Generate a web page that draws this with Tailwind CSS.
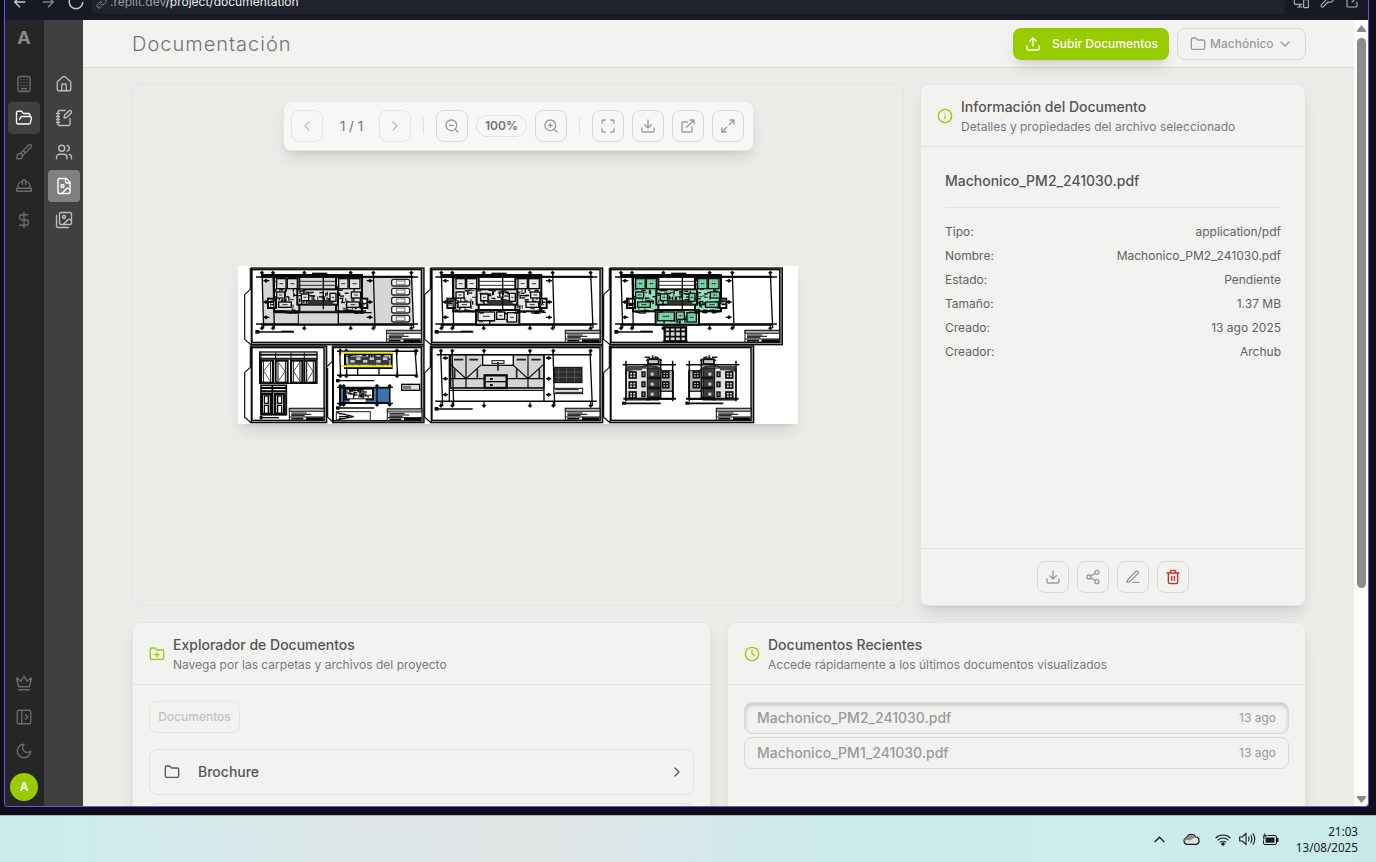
<!DOCTYPE html>
<html lang="es">
<head>
<meta charset="utf-8">
<title>Documentación</title>
<script src="https://cdn.jsdelivr.net/npm/@tailwindcss/browser@4"></script>
</head>
<body class="w-[1376px] h-[862px] overflow-hidden bg-[#0f0e17] font-['Inter',sans-serif] flex flex-col">
<svg class="hidden">
  <symbol id="building" viewBox="0 0 24 24"><rect width="16" height="20" x="4" y="2" rx="2"/><path d="M9 22v-4h6v4M8 6h.01M16 6h.01M12 6h.01M12 10h.01M12 14h.01M16 10h.01M16 14h.01M8 10h.01M8 14h.01"/></symbol>
  <symbol id="folder-open" viewBox="0 0 24 24"><path d="m6 14 1.5-2.9A2 2 0 0 1 9.24 10H20a2 2 0 0 1 1.94 2.5l-1.54 6a2 2 0 0 1-1.95 1.5H4a2 2 0 0 1-2-2V5a2 2 0 0 1 2-2h3.9a2 2 0 0 1 1.69.9l.81 1.2a2 2 0 0 0 1.67.9H18a2 2 0 0 1 2 2v2"/></symbol>
  <symbol id="brush" viewBox="0 0 24 24"><path d="m11 10 3 3"/><path d="M6.5 21A3.5 3.5 0 1 0 3 17.5a2.62 2.62 0 0 1-.708 1.792A1 1 0 0 0 3 21z"/><path d="M9.969 17.031 21.378 5.624a1 1 0 0 0-3.002-3.002L6.967 14.031"/></symbol>
  <symbol id="hat" viewBox="0 0 24 24"><path d="M10 10V5a1 1 0 0 1 1-1h2a1 1 0 0 1 1 1v5"/><path d="M14 6a6 6 0 0 1 6 6v3"/><path d="M4 15v-3a6 6 0 0 1 6-6"/><rect x="2" y="15" width="20" height="4" rx="1"/></symbol>
  <symbol id="dollar" viewBox="0 0 24 24"><path d="M12 2v20M17 5H9.5a3.5 3.5 0 0 0 0 7h5a3.5 3.5 0 0 1 0 7H6"/></symbol>
  <symbol id="crown" viewBox="0 0 24 24"><path d="M11.562 3.266a.5.5 0 0 1 .876 0L15.39 8.87a1 1 0 0 0 1.516.294L21.183 5.5a.5.5 0 0 1 .798.519l-2.834 10.246a1 1 0 0 1-.956.734H5.81a1 1 0 0 1-.957-.734L2.02 6.02a.5.5 0 0 1 .798-.519l4.276 3.664a1 1 0 0 0 1.516-.294z"/><path d="M5 21h14"/></symbol>
  <symbol id="panel" viewBox="0 0 24 24"><rect width="18" height="18" x="3" y="3" rx="2"/><path d="M9 3v18M14 9l3 3-3 3"/></symbol>
  <symbol id="moon" viewBox="0 0 24 24"><path d="M12 3a6 6 0 0 0 9 9 9 9 0 1 1-9-9Z"/></symbol>
  <symbol id="home" viewBox="0 0 24 24"><path d="M15 21v-8a1 1 0 0 0-1-1h-4a1 1 0 0 0-1 1v8"/><path d="M3 10a2 2 0 0 1 .709-1.528l7-5.999a2 2 0 0 1 2.582 0l7 5.999A2 2 0 0 1 21 10v9a2 2 0 0 1-2 2H5a2 2 0 0 1-2-2z"/></symbol>
  <symbol id="notebook" viewBox="0 0 24 24"><path d="M13.4 2H6a2 2 0 0 0-2 2v16a2 2 0 0 0 2 2h12a2 2 0 0 0 2-2v-7.4M2 6h4M2 10h4M2 14h4M2 18h4"/><path d="M21.378 5.626a1 1 0 1 0-3.004-3.004l-5.01 5.012a2 2 0 0 0-.506.854l-.837 2.87a.5.5 0 0 0 .62.62l2.87-.837a2 2 0 0 0 .854-.506z"/></symbol>
  <symbol id="users" viewBox="0 0 24 24"><path d="M16 21v-2a4 4 0 0 0-4-4H6a4 4 0 0 0-4 4v2"/><circle cx="9" cy="7" r="4"/><path d="M22 21v-2a4 4 0 0 0-3-3.870M16 3.130a4 4 0 0 1 0 7.750"/></symbol>
  <symbol id="file-image" viewBox="0 0 24 24"><path d="M15 2H6a2 2 0 0 0-2 2v16a2 2 0 0 0 2 2h12a2 2 0 0 0 2-2V7Z"/><path d="M14 2v4a2 2 0 0 0 2 2h4"/><circle cx="10" cy="12" r="2"/><path d="m20 17-1.296-1.296a2.41 2.41 0 0 0-3.408 0L9 22"/></symbol>
  <symbol id="images" viewBox="0 0 24 24"><path d="M18 22H4a2 2 0 0 1-2-2V6"/><path d="m22 13-1.296-1.296a2.41 2.41 0 0 0-3.408 0L11 18"/><circle cx="12" cy="8" r="2"/><rect width="16" height="16" x="6" y="2" rx="2"/></symbol>
  <symbol id="upload" viewBox="0 0 24 24"><path d="M21 15v4a2 2 0 0 1-2 2H5a2 2 0 0 1-2-2v-4M17 8l-5-5-5 5M12 3v12"/></symbol>
  <symbol id="download" viewBox="0 0 24 24"><path d="M21 15v4a2 2 0 0 1-2 2H5a2 2 0 0 1-2-2v-4M7 10l5 5 5-5M12 15V3"/></symbol>
  <symbol id="folder" viewBox="0 0 24 24"><path d="M20 20a2 2 0 0 0 2-2V8a2 2 0 0 0-2-2h-7.9a2 2 0 0 1-1.69-.9L9.6 3.9A2 2 0 0 0 7.93 3H4a2 2 0 0 0-2 2v13a2 2 0 0 0 2 2Z"/></symbol>
  <symbol id="folder-plus" viewBox="0 0 24 24"><path d="M12 10v6M9 13h6"/><path d="M20 20a2 2 0 0 0 2-2V8a2 2 0 0 0-2-2h-7.9a2 2 0 0 1-1.69-.9L9.6 3.9A2 2 0 0 0 7.93 3H4a2 2 0 0 0-2 2v13a2 2 0 0 0 2 2Z"/></symbol>
  <symbol id="chev-down" viewBox="0 0 24 24"><path d="m6 9 6 6 6-6"/></symbol>
  <symbol id="chev-left" viewBox="0 0 24 24"><path d="m15 18-6-6 6-6"/></symbol>
  <symbol id="chev-right" viewBox="0 0 24 24"><path d="m9 18 6-6-6-6"/></symbol>
  <symbol id="zoom-out" viewBox="0 0 24 24"><circle cx="11" cy="11" r="8"/><path d="m21 21-4.35-4.35M8 11h6"/></symbol>
  <symbol id="zoom-in" viewBox="0 0 24 24"><circle cx="11" cy="11" r="8"/><path d="m21 21-4.35-4.35M11 8v6M8 11h6"/></symbol>
  <symbol id="maximize" viewBox="0 0 24 24"><path d="M8 3H5a2 2 0 0 0-2 2v3M21 8V5a2 2 0 0 0-2-2h-3M3 16v3a2 2 0 0 0 2 2h3M16 21h3a2 2 0 0 0 2-2v-3"/></symbol>
  <symbol id="external" viewBox="0 0 24 24"><path d="M15 3h6v6M10 14 21 3M18 13v6a2 2 0 0 1-2 2H5a2 2 0 0 1-2-2V8a2 2 0 0 1 2-2h6"/></symbol>
  <symbol id="expand" viewBox="0 0 24 24"><path d="M15 3h6v6M21 3l-7 7M3 21l7-7M9 21H3v-6"/></symbol>
  <symbol id="info" viewBox="0 0 24 24"><circle cx="12" cy="12" r="10"/><path d="M12 16v-4M12 8h.01"/></symbol>
  <symbol id="clock" viewBox="0 0 24 24"><circle cx="12" cy="12" r="10"/><path d="M12 6v6l4 2"/></symbol>
  <symbol id="share" viewBox="0 0 24 24"><circle cx="18" cy="5" r="3"/><circle cx="6" cy="12" r="3"/><circle cx="18" cy="19" r="3"/><path d="m8.59 13.51 6.83 3.98M15.41 6.51l-6.82 3.98"/></symbol>
  <symbol id="pen" viewBox="0 0 24 24"><path d="M12 20h9"/><path d="M16.376 3.622a1 1 0 0 1 3.002 3.002L7.368 18.635a2 2 0 0 1-.855.506l-2.872.838a.5.5 0 0 1-.62-.62l.838-2.872a2 2 0 0 1 .506-.854z"/></symbol>
  <symbol id="trash" viewBox="0 0 24 24"><path d="M3 6h18M19 6v14a2 2 0 0 1-2 2H7a2 2 0 0 1-2-2V6M8 6V4a2 2 0 0 1 2-2h4a2 2 0 0 1 2 2v2M10 11v6M14 11v6"/></symbol>
  <symbol id="arrow" viewBox="0 0 24 24"><path d="m12 19-7-7 7-7M19 12H5"/></symbol>
  <symbol id="reload" viewBox="0 0 24 24"><path d="M21 12a9 9 0 1 1-9-9c2.52 0 4.93 1 6.74 2.74L21 8M21 3v5h-5"/></symbol>
  <symbol id="link" viewBox="0 0 24 24"><path d="M10 13a5 5 0 0 0 7.54.54l3-3a5 5 0 0 0-7.07-7.07l-1.72 1.71"/><path d="M14 11a5 5 0 0 0-7.54-.54l-3 3a5 5 0 0 0 7.07 7.07l1.71-1.71"/></symbol>
  <symbol id="devices" viewBox="0 0 24 24"><path d="M14 17H4a2 2 0 0 1-2-2V6a2 2 0 0 1 2-2h14a2 2 0 0 1 2 2M6 21h8M10 17v4"/><rect x="16" y="10" width="7" height="12" rx="1"/></symbol>
  <symbol id="wrench" viewBox="0 0 24 24"><path d="M14.7 6.3a1 1 0 0 0 0 1.4l1.6 1.6a1 1 0 0 0 1.4 0l3.77-3.77a6 6 0 0 1-7.94 7.94l-6.91 6.91a2.12 2.12 0 0 1-3-3l6.91-6.91a6 6 0 0 1 7.94-7.94l-3.76 3.76z"/></symbol>
</svg>

<div class="relative w-full h-[807px] shrink-0 pl-1 pr-[7px]">
 <div class="h-full flex flex-col border-x border-b border-[#6f52f0] rounded-b-[4px] overflow-hidden">
  <!-- browser bar -->
  <div class="h-5 shrink-0 bg-[#171a24] border-b border-[#1e1a28] relative overflow-hidden">
    <div class="absolute -top-[7px] left-0 right-0 h-[21px] flex items-start text-[#c2c5cd]">
      <div class="flex w-[87px] pl-[6px] gap-[10px] fill-none stroke-current stroke-2">
        <svg class="size-[18px]"><use href="#arrow"/></svg>
        <svg class="size-[18px] rotate-180 text-[#7c818d] stroke-current"><use href="#arrow"/></svg>
        <svg class="size-[18px]"><use href="#reload"/></svg>
      </div>
      <div class="w-[1193px] h-[21px] bg-[#20232d] rounded-b-[4px] flex items-start pl-1 text-[12px] leading-[18px]">
        <svg class="size-[11px] mt-[5px] fill-none stroke-[#8b909b] stroke-2"><use href="#link"/></svg>
        <span class="ml-[3px] text-[#9a9fab]">.replit.dev<span class="text-[#eceef2]">/project/documentation</span></span>
      </div>
      <div class="flex pl-[8px] gap-[10px] fill-none stroke-[#aeb2bc] stroke-[1.7]">
        <svg class="size-4"><use href="#devices"/></svg>
        <svg class="size-4"><use href="#wrench"/></svg>
        <svg class="size-4"><use href="#external"/></svg>
      </div>
    </div>
  </div>

  <div class="flex flex-1 min-h-0">
    <!-- main sidebar -->
    <nav class="w-[39px] bg-[#262626] pl-[3px] pr-1 flex flex-col items-center text-[#6b6b6b]">
      <div class="h-[34px] mb-[14px] flex items-center text-[18px] font-bold text-[#8a8a8a]">A</div>
      <div class="flex flex-col gap-[2px] fill-none stroke-current stroke-[1.8] [stroke-linecap:round] [stroke-linejoin:round]">
        <a class="size-8 grid place-items-center"><svg class="size-[18px]"><use href="#building"/></svg></a>
        <a class="size-8 grid place-items-center rounded-[4px] bg-[#404040] text-white stroke-white"><svg class="size-[18px]"><use href="#folder-open"/></svg></a>
        <a class="size-8 grid place-items-center"><svg class="size-[18px]"><use href="#brush"/></svg></a>
        <a class="size-8 grid place-items-center"><svg class="size-[18px]"><use href="#hat"/></svg></a>
        <a class="size-8 grid place-items-center"><svg class="size-[18px]"><use href="#dollar"/></svg></a>
      </div>
      <div class="mt-auto flex flex-col items-center gap-[2px] pb-[5px] fill-none stroke-current stroke-[1.8] [stroke-linecap:round] [stroke-linejoin:round]">
        <a class="size-8 grid place-items-center"><svg class="size-[18px]"><use href="#crown"/></svg></a>
        <a class="size-8 grid place-items-center"><svg class="size-[18px]"><use href="#panel"/></svg></a>
        <a class="size-8 grid place-items-center"><svg class="size-[18px]"><use href="#moon"/></svg></a>
        <span class="mt-1 size-7 rounded-full bg-[#98cc00] text-white text-[12px] font-semibold grid place-items-center stroke-none">A</span>
      </div>
    </nav>
    <nav class="w-[39px] bg-[#404040] pl-1 pr-[3px] pt-12 flex flex-col gap-[2px] text-[#bdbdbd] fill-none stroke-current stroke-[1.8] [stroke-linecap:round] [stroke-linejoin:round]">
      <a class="size-8 grid place-items-center"><svg class="size-[18px]"><use href="#home"/></svg></a>
      <a class="size-8 grid place-items-center"><svg class="size-[18px]"><use href="#notebook"/></svg></a>
      <a class="size-8 grid place-items-center"><svg class="size-[18px]"><use href="#users"/></svg></a>
      <a class="size-8 grid place-items-center rounded-[4px] bg-[#808080] stroke-white"><svg class="size-[18px]"><use href="#file-image"/></svg></a>
      <a class="size-8 grid place-items-center"><svg class="size-[18px]"><use href="#images"/></svg></a>
    </nav>

    <main class="flex-1 min-w-0 flex flex-col bg-[#ebece7] overflow-hidden">
      <header class="h-12 shrink-0 bg-[#f2f2f0] border-b border-[#d9d9d9] pl-[49px] pr-12 flex items-center gap-2">
        <h1 class="mr-auto text-[20px] font-light tracking-[1px] text-[#747474]">Documentación</h1>
        <button class="h-8 w-[156px] rounded-lg bg-[#98cc00] text-white text-[12px] font-medium pl-3 flex items-center shadow-lg"><svg class="size-4 mr-[11px] fill-none stroke-current stroke-2 [stroke-linecap:round] [stroke-linejoin:round]"><use href="#upload"/></svg>Subir Documentos</button>
        <button class="h-8 w-[129px] rounded-lg border border-[#d9d9d9] text-[#9a9a9a] text-[12px] font-medium pl-3 flex items-center fill-none stroke-current stroke-2 [stroke-linecap:round] [stroke-linejoin:round]"><svg class="size-4 mr-1"><use href="#folder"/></svg><span class="stroke-none">Machónico</span><svg class="size-4 ml-[3px]"><use href="#chev-down"/></svg></button>
      </header>

      <div class="flex-1 min-h-0 pl-[49px] pr-12 pt-4 flex flex-col gap-4">
        <div class="flex gap-4 h-[522px] shrink-0">
          <!-- viewer -->
          <section class="w-[772px] rounded-lg border border-[#e3e4e4] flex flex-col items-center pt-4">
            <div class="h-[50px] w-[471px] bg-[#f7f7f7] rounded-lg border border-[#e4e4e4] shadow-lg pl-[7.5px] flex items-center text-[#9a9a9a] fill-none stroke-current stroke-2 [stroke-linecap:round] [stroke-linejoin:round]">
              <button class="size-8 rounded-lg border border-[#d9d9d9] grid place-items-center opacity-60"><svg class="size-4"><use href="#chev-left"/></svg></button>
              <span class="w-14 pt-px pl-px text-center text-[13.3px] text-[#737373] stroke-none">1 / 1</span>
              <button class="size-8 rounded-lg border border-[#d9d9d9] grid place-items-center opacity-60"><svg class="size-4"><use href="#chev-right"/></svg></button>
              <i class="w-px h-4 bg-[#e2e2e4] mx-3"></i>
              <button class="size-8 rounded-lg border border-[#d9d9d9] grid place-items-center"><svg class="size-4"><use href="#zoom-out"/></svg></button>
              <span class="mx-2 w-[51px] h-[22px] rounded-full border border-[#e2e2e4] grid place-items-center text-[12px] font-semibold text-[#737373] stroke-none">100%</span>
              <button class="size-8 rounded-lg border border-[#d9d9d9] grid place-items-center"><svg class="size-4"><use href="#zoom-in"/></svg></button>
              <i class="w-px h-4 bg-[#e2e2e4] mx-3"></i>
              <div class="flex gap-2">
                <button class="size-8 rounded-lg border border-[#d9d9d9] grid place-items-center"><svg class="size-4"><use href="#maximize"/></svg></button>
                <button class="size-8 rounded-lg border border-[#d9d9d9] grid place-items-center"><svg class="size-4"><use href="#download"/></svg></button>
                <button class="size-8 rounded-lg border border-[#d9d9d9] grid place-items-center"><svg class="size-4"><use href="#external"/></svg></button>
                <button class="size-8 rounded-lg border border-[#d9d9d9] grid place-items-center"><svg class="size-4"><use href="#expand"/></svg></button>
              </div>
            </div>
            <div class="mt-[115px] w-[560px] h-[158px] bg-white shadow-lg"><svg id="plans" class="w-[560px] h-[158px]" viewBox="0 0 560 158"></svg></div>
          </section>
          <!-- document info -->
          <section class="w-[386px] rounded-lg border border-[#e4e4e4] bg-[#f2f2f0] shadow-lg flex flex-col text-[12px] text-[#626262]">
            <div class="h-[62px] border-b border-[#e2e2e2] pl-4 flex items-center gap-2">
              <svg class="size-4 fill-none stroke-[#98cc00] stroke-2 [stroke-linecap:round] [stroke-linejoin:round]"><use href="#info"/></svg>
              <div class="pt-[2px]"><h2 class="text-[14px] leading-5 font-medium text-[#555]">Información del Documento</h2><p class="leading-5 text-[#777982]">Detalles y propiedades del archivo seleccionado</p></div>
            </div>
            <div class="flex-1 px-6 pt-6">
              <h3 class="text-[14px] leading-5 font-medium text-[#555] pb-4 border-b border-[#e2e2e2]">Machonico_PM2_241030.pdf</h3>
              <dl class="pt-3 leading-6">
                <div class="flex justify-between"><dt>Tipo:</dt><dd>application/pdf</dd></div>
                <div class="flex justify-between"><dt>Nombre:</dt><dd>Machonico_PM2_241030.pdf</dd></div>
                <div class="flex justify-between"><dt>Estado:</dt><dd>Pendiente</dd></div>
                <div class="flex justify-between"><dt>Tamaño:</dt><dd>1.37 MB</dd></div>
                <div class="flex justify-between"><dt>Creado:</dt><dd>13 ago 2025</dd></div>
                <div class="flex justify-between"><dt>Creador:</dt><dd>Archub</dd></div>
              </dl>
            </div>
            <div class="h-[57px] border-t border-[#e2e2e2] flex items-center justify-center gap-2 text-[#9a9a9a] fill-none stroke-current stroke-2 [stroke-linecap:round] [stroke-linejoin:round]">
              <button class="size-8 rounded-lg border border-[#d9d9d9] grid place-items-center"><svg class="size-4"><use href="#download"/></svg></button>
              <button class="size-8 rounded-lg border border-[#d9d9d9] grid place-items-center"><svg class="size-4"><use href="#share"/></svg></button>
              <button class="size-8 rounded-lg border border-[#d9d9d9] grid place-items-center"><svg class="size-4"><use href="#pen"/></svg></button>
              <button class="size-8 rounded-lg border border-[#d9d9d9] grid place-items-center stroke-[#dc2626]"><svg class="size-4"><use href="#trash"/></svg></button>
            </div>
          </section>
        </div>
        <div class="grid grid-cols-2 gap-4 h-[400px] shrink-0">
          <section class="rounded-lg border border-[#e4e4e4] bg-[#f2f2f0] shadow-lg text-[12px]">
            <div class="h-[62px] border-b border-[#e2e2e2] pl-4 flex items-center gap-2">
              <svg class="size-4 fill-none stroke-[#98cc00] stroke-2 [stroke-linecap:round] [stroke-linejoin:round]"><use href="#folder-plus"/></svg>
              <div class="pt-[2px]"><h2 class="text-[14px] leading-5 font-medium text-[#555]">Explorador de Documentos</h2><p class="leading-5 text-[#777982]">Navega por las carpetas y archivos del proyecto</p></div>
            </div>
            <div class="p-4 flex flex-col items-start">
              <button class="h-8 w-[91px] rounded-lg border border-[#e4e4e4] font-medium text-[#c2c2c2] mb-4">Documentos</button>
              <div class="w-full h-[46px] rounded-lg border border-[#e2e2e2] px-[14px] pr-2 mb-2 flex items-center text-[14px] font-medium text-[#555] fill-none stroke-current stroke-2 [stroke-linecap:round] [stroke-linejoin:round]">
                <svg class="size-4 mr-[18px]"><use href="#folder"/></svg><span class="stroke-none mr-auto pb-[2px]">Brochure</span><svg class="size-4"><use href="#chev-right"/></svg>
              </div>
              <div class="w-full h-[46px] rounded-lg border border-[#e2e2e2]"></div>
            </div>
          </section>
          <section class="rounded-lg border border-[#e4e4e4] bg-[#f2f2f0] shadow-lg text-[12px]">
            <div class="h-[62px] border-b border-[#e2e2e2] pl-4 flex items-center gap-2">
              <svg class="size-4 fill-none stroke-[#98cc00] stroke-2 [stroke-linecap:round] [stroke-linejoin:round]"><use href="#clock"/></svg>
              <div class="pt-[2px]"><h2 class="text-[14px] leading-5 font-medium text-[#555]">Documentos Recientes</h2><p class="leading-5 text-[#777982]">Accede rápidamente a los últimos documentos visualizados</p></div>
            </div>
            <div class="px-4 pt-[17px] flex flex-col gap-[3px] text-[#9a9a9a]">
              <div class="h-8 rounded-lg border border-[#d9d9d9] px-3 flex items-center justify-between shadow-[inset_0_2px_4px_rgba(0,0,0,0.2)]"><span class="pb-[2px] text-[14px] font-medium">Machonico_PM2_241030.pdf</span><span>13 ago</span></div>
              <div class="h-8 rounded-lg border border-[#d9d9d9] px-3 flex items-center justify-between"><span class="pb-[2px] text-[14px] font-medium">Machonico_PM1_241030.pdf</span><span>13 ago</span></div>
            </div>
          </section>
        </div>
      </div>
    </main>
    <!-- scrollbar -->
    <div class="w-[14px] bg-[#fcfcfc] flex flex-col items-center pt-[5px] pb-[3px] pl-px">
      <svg class="w-[9px] h-[7px] fill-[#8b8b8b]" viewBox="0 0 9 7"><path d="M4.5 0 9 5.5V7H0V5.5z"/></svg>
      <div class="mt-[6px] w-[9px] h-[550px] rounded-full bg-[#8b8b8b]"></div>
      <svg class="mt-auto w-[9px] h-[7px] fill-[#8b8b8b]" viewBox="0 0 9 7"><path d="M4.500 7 0 1.500V0h9v1.500z"/></svg>
    </div>
  </div>
 </div>
</div>
<div class="h-2 shrink-0"></div>
<!-- taskbar -->
<footer class="flex-1 border-t border-[#a9b3b6] bg-[linear-gradient(90deg,#c8ebeb_0%,#cdecec_5%,#d7e8ea_17%,#dfe6e7_27%,#e0e5e5_40%,#d9e7ea_48%,#cfe9eb_56%,#c9ebec_66%,#cdecee_80%,#c9eaeb_100%)] flex items-center justify-end pr-[18px] text-[#141b1d]">
  <svg class="w-[11px] h-[7px] mr-[18px] fill-none stroke-current stroke-[1.3]" viewBox="0 0 11 7"><path d="M.7 6 5.500 1.200 10.300 6"/></svg>
  <svg class="w-[17px] h-3 mr-[15px]" viewBox="0 0 17 12"><path d="M4 11.300a3.300 3.300 0 0 1-.4-6.500A5 5 0 0 1 12.700 4a3.700 3.700 0 0 1 .5 7.300z" fill="#e3e3e3" stroke="#141b1d" stroke-width="1.200"/><path d="M1.300 7.500C1.300 5.500 2.500 5 3.800 4.900 5 1 11 .6 12.400 4.300l-6 3.200C5 6.500 3 7 1.500 8.300z" fill="#8b8b8b"/></svg>
  <svg class="w-4 h-[13px] mr-2 fill-none stroke-current stroke-[1.1]" viewBox="0 0 16 13"><path d="M.6 5a10.500 10.500 0 0 1 14.800 0M2.800 7.200a7.400 7.400 0 0 1 10.400 0M5 9.400a4.300 4.300 0 0 1 6 0"/><circle cx="8" cy="11" r="1.200" fill="currentColor"/></svg>
  <svg class="w-[17px] h-[14px] mr-[6px] fill-none stroke-current stroke-[1.1]" viewBox="0 0 17 14"><path d="M.7 5h2.500L7 1.500v11L3.200 9H.7zM9.300 4.800q1.500 2.200 0 4.400M11.600 3q2.700 4 0 8M13.800 1.200q4 5.800 0 11.600"/></svg>
  <svg class="w-[17px] h-[14px] mr-[17px] mb-px" viewBox="0 0 17 14"><rect x="1.500" y="3.500" width="13" height="9" rx="1.500" fill="none" stroke="currentColor"/><rect x="3.500" y="5.500" width="9" height="5.200" fill="currentColor"/><path d="M15 6h1.500v4H15z" fill="currentColor"/><path d="M3.500 0 .5 4.300h2l-1 4 4-5.300h-2z" fill="currentColor" stroke="#cdebec" stroke-width=".5"/></svg>
  <div class="text-right font-['Noto_Sans',sans-serif] text-[11.7px] leading-4"><div>21:03</div><div>13/08/2025</div></div>
</footer>

<script>
// Draws the architectural plan sheets shown inside the viewer.
const out = [];
const add = s => out.push(s);
const R = (x, y, w, h, f = '#0a0a0a', s = 'none', sw = 0) => add(`<rect x="${x}" y="${y}" width="${w}" height="${h}" fill="${f}" stroke="${s}" stroke-width="${sw}"/>`);
const L = (d, sw = 3, c = '#0a0a0a', f = 'none') => add(`<path d="${d}" fill="${f}" stroke="${c}" stroke-width="${sw}"/>`);
let seed = 7;
const rnd = () => (seed = (seed * 16807) % 2147483647) / 2147483647;

function titleBlock(x, y) {
  R(x, y, 104, 35, '#fff', '#111', 3);
  R(x, y, 104, 9, '#aaa', '#111', 2.5);
  L(`M${x} ${y + 26}h104`, 3);
  L(`M${x + 6} ${y + 14}h46M${x + 6} ${y + 18}h60M${x + 6} ${y + 22}h40`, 3);
  L(`M${x + 6} ${y + 31}h36`, 5); L(`M${x + 50} ${y + 31}h52`, 8);
}
function sheet(x, y, w, h) {
  R(x, y, w, h, '#8f8f8f', '#0a0a0a', 4);
  R(x + 2, y + 5, w - 10, h - 12, '#fff', '#0a0a0a', 4);
  L(`M${x - 3} ${y}v64l-17 16v134l20 17`, 3.500);
  titleBlock(x + w - 112, y + h - 43);
}
// Grid axis heads drawn as small diamonds.
const head = (x, y) => L(`M${x - 6} ${y}l6-6 6 6-6 6z`, 1, '#0a0a0a', '#0a0a0a');
function axes(xs, y1, y2) { xs.forEach(x => { L(`M${x} ${y1}v${y2 - y1}`, 4); head(x, y1 + 2); head(x, y2 - 2); }); }
function marks(xs, y1, y2) { xs.forEach(x => { head(x, y1); head(x, y2); L(`M${x} ${y1}v14M${x} ${y2 - 14}v14`, 3); }); }

function tile(x, y, w, h, tint) {
  R(x, y, w, h, tint, '#0a0a0a', 4);
  if (tint[1] === '8') for (let i = 5; i < w; i += 7) L(`M${x + i} ${y}v${h}`, 1.500, '#2f8a64');
  L(`M${x + w * .3} ${y + h * .5}h${w * .4}`, 3, '#333');
}
function mass(x, y, w, h, tint, density = 130) {
  R(x, y, w, h, tint, '#0a0a0a', 6);
  for (let i = 0; i < w * h / density; i++) {
    const a = rnd() < .55, px = x + rnd() * (w - 14), py = y + rnd() * (h - 10);
    R(px, py, a ? 12 : 4, a ? 4 : 11, rnd() < .7 ? '#0a0a0a' : '#555');
  }
}
function house(x, y, tint, lower) {
  // two wings joined by a denser service core
  mass(x + 38, y, 76, 102, tint, 190); mass(x + 224, y, 78, 102, tint, 190);
  mass(x + 108, y + 36, 122, 46, tint);
  R(x + 140, y + 68, 76, 14, '#333');
  mass(x + 20, y + 64, 24, 28, '#fff', 100); mass(x + 298, y + 64, 20, 28, '#fff', 100);
  if (lower) mass(x + 106, y + 98, 130, 44, tint, 180);
  [[46,4,28,30],[78,4,30,30],[232,4,28,30],[264,4,32,30],[46,44,24,18],[270,44,28,18],[52,74,38,16],[256,74,38,16],[120,50,22,20],[206,48,18,24]].forEach(a => tile(x + a[0], y + a[1], a[2], a[3], tint));
  if (lower) [[112,104,50,26],[168,104,24,22],[200,106,28,28]].forEach(a => tile(x + a[0], y + a[1], a[2], a[3], tint));
  L(`M${x + 112} ${y + 12}h110M${x + 112} ${y + 24}h110`, 2.5);
  L(`M${x + 186} ${y}v96`, 4);
  for (let k = 0; k < 14; k++) { R(x + 32 + rnd() * 86, y + 96 + rnd() * 10, 12, 4); R(x + 220 + rnd() * 84, y + 96 + rnd() * 10, 12, 4); }
  [10,74,120].forEach(k => { head(x + 14, y + k); head(x + 326, y + k); L(`M${x + 6} ${y + k}h18M${x + 316} ${y + k}h18`, 4); });
}
function plot(x, tint, lower, fill) {
  if (fill) R(x + 4, 45, 452, 141, fill);
  L(`M${x - 16} 45h486M${x - 16} 186h486`, 4.500);
  L(`M${x} 40h305`, 8); L(`M${x} 44h456`, 6); L(`M${x} 188h456`, 6);
  L(`M${x + 152} 34h46`, 4);
  if (fill) R(x + 112, 60, 112, 120, fill);
  house(x, 46, tint, lower);
  L(`M${x + 2} 30l5 168M${x + 35} 30l4 168M${x + 336} 30l5 168M${x + 450} 30l7 168`, 4);
  marks([x + 2, x + 35, x + 336, x + 450, x + 129, x + 268], 32, 199);
  L(`M${x - 10} 210h108`, 4); R(x - 18, 204, 12, 11); R(x + 60, 206, 36, 4);
}

add('<g transform="translate(-3 -4) scale(.3333)">');
sheet(49, 18, 518, 230); plot(79, '#dedede', false, '#d6d6d6');
R(190, 148, 120, 38, '#d6d6d6', '#0a0a0a', 3); L('M120 152h290M310 130v56', 3.500);
for (let i = 0; i < 5; i++) { const y = 52 + i * 27; add(`<rect x="470" y="${y}" width="54" height="20" rx="6" fill="#fff" stroke="#222" stroke-width="4"/>`); L(`M484 ${y + 3}v14M510 ${y + 3}v14M484 ${y + 5}h26M484 ${y + 15}h26`, 2.5, '#555'); }
sheet(49, 252, 226, 230);
R(74, 270, 172, 94, '#fff', '#0a0a0a', 4); L('M74 278h174M74 290h174', 6, '#1a1a1a');
[[78,36],[122,36],[168,34],[208,34]].forEach(([x, w], i) => {
  R(x, 296, w, 66, '#fff', '#0a0a0a', 6); L(`M${x + 7} 296v66M${x + w - 7} 296v66`, 3);
  L(i % 2 ? `M${x + 9} 302l${w - 17} 26l-${w - 17} 28` : `M${x + w - 9} 302l-${w - 17} 26l${w - 17} 28`, 2);
  L(`M${x} 300v-28`, 3);
});
R(78, 370, 76, 88, '#fff', '#0a0a0a', 5); L('M78 378h78M78 388h78', 6);
[[80,28],[120,28]].forEach(([x, w]) => { R(x, 396, w, 60, '#fff', '#0a0a0a', 8); R(x + 8, 402, w - 16, 22, '#fff', '#0a0a0a', 4); R(x + 8, 430, w - 16, 24, '#fff', '#0a0a0a', 4); });
L('M112 370v88', 5); R(74, 462, 9, 10); L('M82 467h50', 4);
R(293, 252, 274, 230, '#8f8f8f', '#0a0a0a', 4); R(295, 257, 264, 219, '#fff', '#0a0a0a', 4); L('M276 314l16-16v-46M278 318v148l16 14', 3.500); titleBlock(457, 441);
L('M306 268h244M306 340h240', 4.500); L('M314 262l3 84M332 262l4 84M484 262l4 84M540 262l6 84', 4); marks([316, 334, 486, 544], 266, 342);
mass(330, 276, 140, 42, '#bbb', 110); R(340, 284, 122, 24, '#3a3a3a'); [346,364,384,404,424,444].forEach((x, i) => R(x, i % 2 ? 286 : 294, 13, 8, '#c8c8c8'));
L('M318 272h154M318 313h154', 6, '#efe912'); L('M368 318v20M432 318v20', 4);
R(303, 351, 11, 10); L('M312 356h106', 4);
R(314, 378, 150, 44, '#3e72ab', '#0a0a0a', 4); mass(330, 380, 84, 32, '#fff', 70); R(344, 412, 48, 8, '#fff'); L('M426 370v58M316 370v58M326 370v58M464 370v58', 4); marks([316, 326, 426, 464], 372, 428); L('M306 376h168M306 424h168', 4);
R(303, 433, 11, 10); L('M312 438h106', 4);
R(500, 367, 54, 18, '#ddd', '#0a0a0a', 4); R(504, 371, 24, 10, '#777');
R(304, 449, 102, 26, '#fff', '#222', 3); L('M306 452l50 12l-50 10M312 456h18M312 464h30M312 470h18', 3.500);
add('</g><g transform="translate(186 -4) scale(.3333)">');
sheet(22, 18, 514, 230); plot(50, '#e9e9e9', true);
sheet(22, 252, 514, 230);
R(80, 278, 280, 100, '#d3d3d3', '#0a0a0a', 4); R(176, 278, 92, 32, '#fff', '#0a0a0a', 4); R(204, 296, 36, 8, '#fff', '#0a0a0a', 3);
L('M38 278h466M34 418h484', 4.500); L('M76 385h284M78 378h282', 3.500); L('M50 264l6 168M84 264l5 168M387 264l5 168M498 264l7 168', 4); marks([51, 85, 180, 318, 388, 500], 266, 431);
L('M80 308l46 42l46-42M126 278v100M266 308l46 42l46-42M312 278v100M80 350h280', 3.500); L('M76 278v140M360 278v140', 4);
L('M90 293h28M136 293h26M278 293h28M322 293h28M92 320v28M160 320v28M278 320v28M346 320v28M222 300v26', 5, '#222');
R(182, 340, 66, 38, '#d3d3d3', '#0a0a0a', 7); L('M182 359h66', 4); R(198, 348, 8, 6); R(198, 366, 8, 6);
[288, 350, 398].forEach(y => { head(64, y); head(374, y); L(`M56 ${y}h16M366 ${y}h16`, 4); });
R(390, 316, 84, 46, '#2c2c2c', '#0a0a0a', 3); L('M404 318v42M428 318v42M452 318v42M392 330h80M392 346h80', 1.500, '#7c7c7c');
R(390, 379, 86, 16, '#fff', '#0a0a0a', 3); L('M394 383h70M394 391h80', 3);
L('M32 441h114', 4); R(32, 435, 11, 11);
add('</g><g transform="translate(362 -4) scale(.3333)">');
sheet(31, 18, 516, 230); plot(61, '#8fe0bb', true);
R(194, 196, 64, 42, '#ddd', '#0a0a0a', 7); L('M194 208h64M194 224h64M210 196v42M226 196v42M242 196v42', 5); L('M188 238h76', 4);
sheet(31, 252, 430, 230);
function facade(x, flip) {
  add(`<g transform="translate(${x} 0) scale(${flip ? -1 : 1} 1)">`);
  R(10, 318, 68, 96, '#e2e2e2', '#0a0a0a', 3); R(74, 318, 34, 96, '#3c3c3c', '#0a0a0a', 3); R(112, 326, 40, 62, '#b4b4b4', '#0a0a0a', 3); R(112, 388, 40, 24, '#fff', '#0a0a0a', 3);
  L('M10 326l62-14l34 4l12 10', 6, '#333'); R(12, 312, 46, 13, '#484848');
  [330, 360, 390].forEach(y => { R(20, y, 20, 18, '#ddd', '#0a0a0a', 5); L(`M30 ${y}v18M20 ${y + 9}h20`, 3.500); R(58, y, 9, 14, '#777', '#0a0a0a', 4); if (y < 390) { R(120, y, 18, 17, '#ccc', '#0a0a0a', 5); L(`M129 ${y}v16M120 ${y + 8}h18`, 3.500); } R(78, y + 14, 34, 8, '#111'); R(84, y + 2, 9, 9, '#ccc'); });
  L('M0 308h160', 4.500); L('M2 410h158', 6); L('M10 296v122M150 296v122M114 290v124', 4.500);
  R(76, 292, 32, 14, '#ccc', '#0a0a0a', 5); L('M70 296q22-14 48 0M90 280v10M66 286h16M96 284l12 4', 4.500, '#222');
  add('</g>');
}
facade(68, false); facade(418, true);
L('M70 424h112M258 424h112', 5); R(66, 419, 12, 9); R(256, 419, 12, 9);
add('</g>');
document.getElementById('plans').innerHTML = out.join('');
</script>
</body>
</html>
